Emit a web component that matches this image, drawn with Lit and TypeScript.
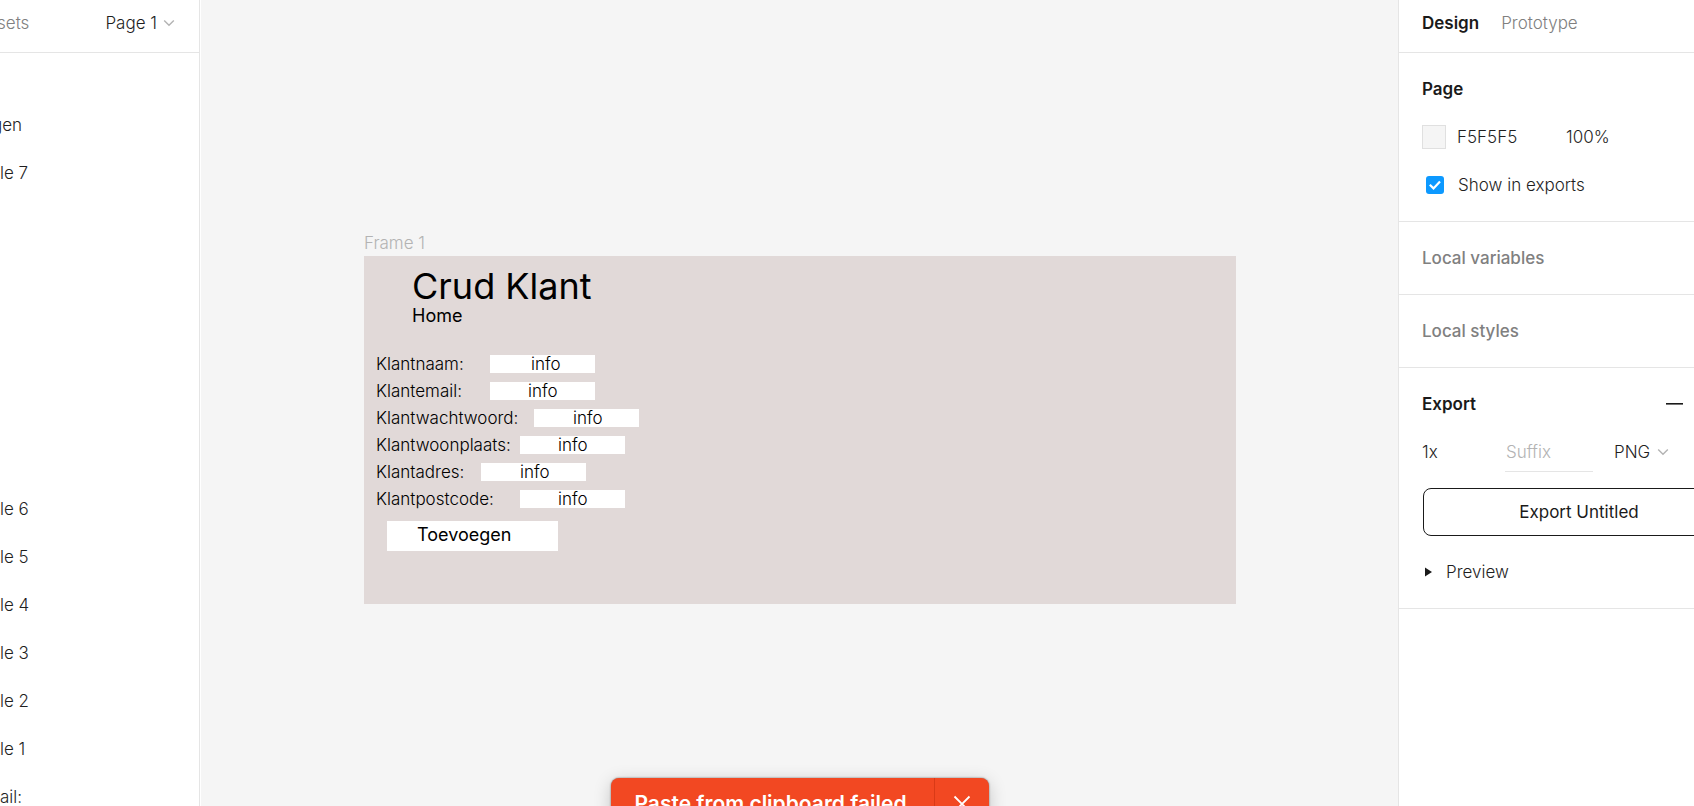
import { LitElement, html, css } from "lit";
import { customElement } from "lit/decorators.js";

const LAYERS = ["", "gen", "le 7", "", "", "", "", "", "", "le 6", "le 5", "le 4", "le 3", "le 2", "le 1", "ail:"];

// Each row keeps the width reserved for its label and the indent of its value.
const FIELDS = [
  { id: "naam", label: "Klantnaam:", labelWidth: 114, indent: 41 },
  { id: "email", label: "Klantemail:", labelWidth: 114, indent: 38 },
  { id: "wachtwoord", label: "Klantwachtwoord:", labelWidth: 158, indent: 39 },
  { id: "woonplaats", label: "Klantwoonplaats:", labelWidth: 144, indent: 38 },
  { id: "adres", label: "Klantadres:", labelWidth: 105, indent: 39 },
  { id: "postcode", label: "Klantpostcode:", labelWidth: 144, indent: 38 },
];

const base = css`
  * { box-sizing: border-box; }
  button, input, select {
    font: inherit; color: inherit; background: none; border: 0;
    border-radius: 0; margin: 0; padding: 0; appearance: none; outline: none;
  }
  h1, h2, p, ul { margin: 0; padding: 0; font: inherit; }
  svg { display: block; flex: none; fill: none; }
`;

const chevron = html`<svg width="12" height="8" viewBox="0 0 12 8" stroke="#b3b3b3" stroke-width="1.4"><path d="M1.2 1.4 6 6.2l4.800-4.800"/></svg>`;

@customElement("layers-panel")
export class LayersPanel extends LitElement {
  static styles = [base, css`
    :host { display: block; background: #fff; border-right: 1px solid #e5e5e5; overflow: hidden; }
    .head { height: 53px; padding: 0 24px 7px 0; display: flex; align-items: center; justify-content: space-between; border-bottom: 1px solid #e5e5e5; }
    .assets { color: #808080; margin-left: -3px; }
    .page { display: flex; align-items: center; gap: 6px; }
    ul { list-style: none; }
    li { height: 48px; line-height: 49px; white-space: nowrap; }
    .cut { margin-left: -8px; }
  `];
  render() {
    return html`
      <div class="head">
        <button class="assets">sets</button>
        <button class="page">Page 1 ${chevron}</button>
      </div>
      <ul>${LAYERS.map((name) => html`<li class=${name === "gen" ? "cut" : ""}>${name}</li>`)}</ul>
    `;
  }
}

@customElement("design-canvas")
export class DesignCanvas extends LitElement {
  static styles = [base, css`
    :host { display: flex; justify-content: center; align-items: flex-start; background: #f5f5f5; border-left: 1px solid #fff; padding: 232px 24px 0 25px; position: relative; overflow: hidden; color: #000; }
    .node { width: 100%; max-width: 872px; }
    .name { height: 24px; line-height: 23px; color: #b3b3b3; }
    .frame { background: #e1d9d8; padding: 10px 12px 53px; }
    .title { font-size: 36px; font-weight: 400; line-height: 40px; padding-left: 36px; }
    .home { display: block; width: max-content; margin-left: 36px; font-size: 18px; font-weight: 400; line-height: 20px; color: inherit; text-decoration: none; }
    .fields { display: grid; gap: 9px; margin-top: 29px; }
    .field { display: flex; align-items: center; height: 18px; line-height: 18px; }
    .field label { flex: none; white-space: nowrap; }
    .field input { width: 105px; height: 18px; line-height: 18px; background: #fff; }
    .add { display: block; width: 171px; height: 30px; margin: 13px 0 0 11px; padding: 0 0 2px 30px; background: #fff; font-size: 18px; font-weight: 400; line-height: 28px; text-align: left; }
    .toast { position: absolute; left: 50%; bottom: -24px; transform: translateX(-50%); display: flex; width: 378px; height: 52px; border-radius: 8px; background: #f24822; color: #fff; box-shadow: 0 0 2px rgba(0,0,0,.55), 0 4px 18px rgba(0,0,0,.2); }
    .message { flex: 1; padding-left: 24px; font-size: 21px; font-weight: 600; line-height: 52px; white-space: nowrap; }
    .close { width: 55px; display: grid; place-items: center; border-left: 1px solid #d93a17; }
  `];
  render() {
    return html`
      <section class="node">
        <p class="name">Frame 1</p>
        <div class="frame">
          <h1 class="title">Crud Klant</h1>
          <a class="home" href="#home">Home</a>
          <div class="fields">
            ${FIELDS.map((f) => html`
              <div class="field">
                <label for=${f.id} style="width:${f.labelWidth}px">${f.label}</label>
                <input id=${f.id} value="info" style="padding-left:${f.indent}px">
              </div>`)}
          </div>
          <button class="add">Toevoegen</button>
        </div>
      </section>
      <div class="toast" role="alert">
        <span class="message">Paste from clipboard failed</span>
        <button class="close" aria-label="Close">
          <svg width="18" height="18" viewBox="0 0 18 18" stroke="#fff" stroke-width="1.800"><path d="m1.500 1.500 15 15m0-15-15 15"/></svg>
        </button>
      </div>
    `;
  }
}

@customElement("design-panel")
export class DesignPanel extends LitElement {
  static styles = [base, css`
    :host { display: block; background: #fff; border-left: 1px solid #e5e5e5; overflow: hidden; }
    .inner { width: 359px; }
    .tabs { height: 53px; padding: 0 23px 7px; display: flex; align-items: center; gap: 22px; border-bottom: 1px solid #e5e5e5; color: #808080; }
    .tabs .on, .strong { font-weight: 600; color: #1a1a1a; }
    section { padding: 12px 23px; border-bottom: 1px solid #e5e5e5; }
    .row { height: 48px; display: flex; align-items: center; }
    .muted { font-weight: 500; color: #808080; }
    .swatch { width: 24px; height: 24px; background: #f5f5f5; border: 1px solid #e0e0e0; margin-right: 11px; }
    .hex { width: 109px; }
    .percent { width: 64px; }
    .check { display: grid; margin: 0 14px 0 4px; }
    .check > * { grid-area: 1 / 1; }
    .check input { width: 18px; height: 18px; border-radius: 3px; background: #0d99ff; }
    .check svg { pointer-events: none; }
    .spread { justify-content: space-between; padding-right: 40px; }
    .minus { padding: 8px 0; margin-right: 12px; }
    .scale { width: 83px; }
    .suffix { width: 88px; height: 40px; padding-left: 1px; margin-right: 21px; border-bottom: 1px solid #e5e5e5; }
    .suffix::placeholder { color: #b3b3b3; opacity: 1; }
    .format { display: flex; align-items: center; gap: 6px; }
    .export { display: block; width: 312px; height: 48px; margin: 12px 0 12px 1px; border: 1px solid #1a1a1a; border-radius: 8px; color: #1a1a1a; font-weight: 400; }
    .preview { gap: 14px; padding-left: 3px; width: 100%; }
  `];
  render() {
    return html`
      <div class="inner">
        <div class="tabs"><button class="on">Design</button><button>Prototype</button></div>
        <section>
          <h2 class="row strong">Page</h2>
          <div class="row">
            <button class="swatch" aria-label="Page colour"></button>
            <input class="hex" aria-label="Hex" value="F5F5F5">
            <input class="percent" aria-label="Opacity" value="100%">
          </div>
          <div class="row">
            <span class="check">
              <input type="checkbox" id="exports" checked>
              <svg width="18" height="18" viewBox="0 0 18 18" stroke="#fff" stroke-width="2.200"><path d="m3.800 8.800 3.700 3.600 6.500-7"/></svg>
            </span>
            <label for="exports">Show in exports</label>
          </div>
        </section>
        <section><h2 class="row muted">Local variables</h2></section>
        <section><h2 class="row muted">Local styles</h2></section>
        <section>
          <div class="row spread">
            <h2 class="strong">Export</h2>
            <button class="minus" aria-label="Remove export">
              <svg width="17" height="2" viewBox="0 0 17 2"><path d="M0 0h17v1.600H0z" fill="#1a1a1a"/></svg>
            </button>
          </div>
          <div class="row">
            <input class="scale" aria-label="Scale" value="1x">
            <input class="suffix" aria-label="Suffix" placeholder="Suffix">
            <span class="format"><select aria-label="Format"><option>PNG</option></select>${chevron}</span>
          </div>
          <button class="export">Export Untitled</button>
          <button class="row preview">
            <svg width="7" height="10" viewBox="0 0 7 10"><path d="M0 0.500 7 5 0 9.500z" fill="#1a1a1a"/></svg>
            Preview
          </button>
        </section>
      </div>
    `;
  }
}

@customElement("app-root")
export class AppRoot extends LitElement {
  static styles = css`
    :host { display: grid; grid-template-columns: 200px minmax(0, 1fr) 296px; height: 100vh; overflow: hidden; font: 300 17px/24px Inter, sans-serif; color: #1f1f1f; }
  `;
  render() {
    return html`<layers-panel></layers-panel><design-canvas></design-canvas><design-panel></design-panel>`;
  }
}
